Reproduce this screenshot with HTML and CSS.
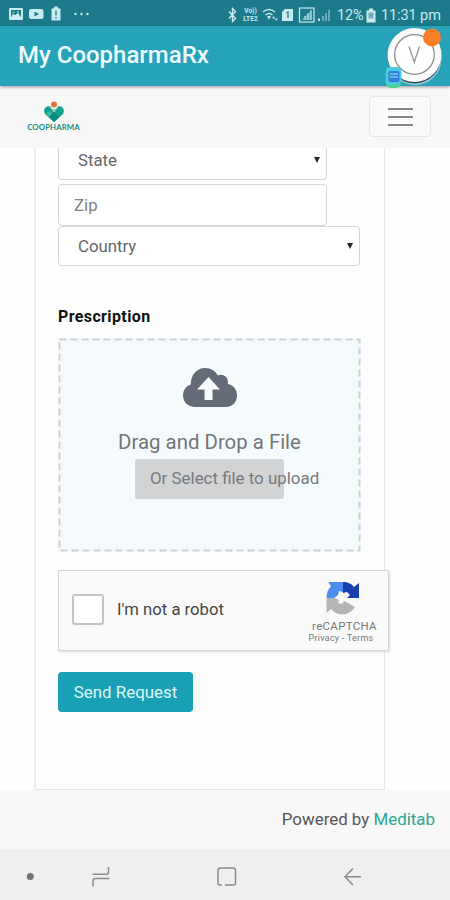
FILE: index.html
```html
<!DOCTYPE html>
<html lang="en">
<head>
<meta charset="utf-8">
<title>My CoopharmaRx</title>
<link rel="stylesheet" href="styles.css">
</head>
<body>
<div class="status">
  <svg class="status-left" width="92" height="26" viewBox="0 0 92 26">
    <rect x="9" y="8" width="14" height="12" rx="1" fill="#c8eaf0"/>
    <path d="M11 10h10v7l-3-4-3 2-2-1-2 3z" fill="#1c7a8a"/>
    <path d="M12.500 13l2-1M17 12h2" stroke="#c8eaf0"/>
    <rect x="29" y="9" width="14.500" height="10" rx="2" fill="#c8eaf0"/>
    <path d="M34.500 11.500l4.500 2.500-4.500 2.500z" fill="#1c7a8a"/>
    <path d="M51.500 8.500H54v-2h4v2h2.500v12h-9z" fill="#c8eaf0"/>
    <path d="M56 10.500v5M56 17v1.500" stroke="#1c7a8a" stroke-width="1.300"/>
    <g fill="#c8eaf0"><circle cx="75.500" cy="14" r="1.200"/><circle cx="81.500" cy="14" r="1.200"/><circle cx="87.500" cy="14" r="1.200"/></g>
  </svg>
  <div class="status-right">
    <svg width="9" height="16" viewBox="0 0 9 16"><path d="M1 4.500l6.500 7L4.500 14.500v-13l3 3-6.500 7" fill="none" stroke="#c8eaf0" stroke-width="1.400"/></svg>
    <div class="volte"><span>Vo))</span><span>LTE2</span></div>
    <svg width="70" height="18" viewBox="0 0 70 18">
      <g fill="none" stroke="#c8eaf0" stroke-width="1.500"><path d="M1 6q6-5 12 0M3.500 9q3.500-3 7 0"/></g>
      <path d="M5 10.500q2-1.500 4 0l-2 3zM10 12l2-2 1 3zM13 13l3-1-2 3z" fill="#c8eaf0"/>
      <path d="M20 6l3-3h8v12H20z" fill="#c8eaf0"/><path d="M24.500 7l1.500-1v6" fill="none" stroke="#1c7a8a" stroke-width="1.200"/>
      <rect x="37.500" y="2" width="14.500" height="14" fill="none" stroke="#c8eaf0" stroke-width="1.200"/>
      <path d="M39.500 14l10-10v10z" fill="#65aab5"/><path d="M43 14v-4M46 14V7M49 14V4" stroke="#c8eaf0"/>
      <path d="M56 15v-2.500h2V15z" fill="#c8eaf0"/><path d="M60 15v-5h2v5zM63 15V7h2v8zM66 15V4h2v11z" fill="#65aab5"/>
    </svg>
    <span class="battery">12%</span>
    <svg class="cell" width="10" height="15" viewBox="0 0 10 15"><path d="M.5 2.500H3V.5h4v2h2.500v12h-9z" fill="#c8eaf0"/><path d="M2.500 4.500h5v6h-5z" fill="#6eacb9"/></svg>
    <span class="time">11:31 pm</span>
  </div>
</div>
<header class="appbar">
  <h1>My CoopharmaRx</h1>
  <svg class="bubble" width="66" height="66" viewBox="0 0 66 66">
    <circle cx="35" cy="32.500" r="26.500" fill="#a8d0d8"/>
    <circle cx="34.500" cy="31" r="26.500" fill="#274c5e"/>
    <circle cx="34.500" cy="29" r="27" fill="#fcfcfc"/>
    <circle cx="34.500" cy="28.500" r="19.800" fill="#fff" stroke="#8e8e8e" stroke-width="1.300"/>
    <path d="M29 20.500l5.300 15.500 5.200-15.500" fill="none" stroke="#999" stroke-width="1.400"/>
    <circle cx="52" cy="11.500" r="9" fill="#fa7d28"/>
    <rect x="5.500" y="41" width="16" height="21" rx="6" fill="#43d58f"/>
    <rect x="6" y="41.500" width="15" height="17" rx="3" fill="#48cbe0"/>
    <rect x="8.500" y="45" width="11" height="11" rx="2" fill="#327fd7"/>
    <path d="M10 48h8M10 51h8" stroke="#a4eaf5" stroke-width="1.200"/>
  </svg>
</header>
<nav class="navbar">
  <div class="logo">
    <svg width="22" height="22" viewBox="0 0 22 22">
      <path d="M11 21L2.500 13.500C-1 9 3 4.500 7 5.500L11 9l4-3.500c4-1 8 3.500 4.500 8z" fill="#169f91"/>
      <path d="M2 12.500L11 21l4-4-8-7z" fill="#36b7a1"/>
      <path d="M11 21l-5-5 5-5 5 5z" fill="#08897e"/>
      <path d="M7.500 6l3.500 5 3.500-5" fill="none" stroke="#bce4d8"/>
      <circle cx="11" cy="3.500" r="3" fill="#dc7834"/>
    </svg>
    <span>COOPHARMA</span>
  </div>
  <button class="menu" aria-label="Menu"><i></i><i></i><i></i></button>
</nav>
<main>
  <form class="card">
    <div class="field state"><span>State</span><i class="caret"></i></div>
    <div class="field zip"><span>Zip</span></div>
    <div class="field country"><span>Country</span><i class="caret"></i></div>
    <h2>Prescription</h2>
    <div class="drop">
      <svg class="cloud" width="54" height="39" viewBox="0 0 54 39">
        <path d="M12 39C5 39 0 34 0 27.500c0-5.300 3.200-9.500 7.800-11C7.500 7 14 0 22 0c6 0 10.300 2.800 12.800 7.500C40 5 46 9 44.800 16 50.500 17 54 21.500 54 27.500 54 34 49.500 39 43 39z" fill="#646b76"/>
        <path d="M25.500 9L37 21.500h-7.500V32h-8V21.500H14z" fill="#f8fbfc"/>
      </svg>
      <p class="drag">Drag and Drop a File</p>
      <div class="select"><span>Or Select file to upload</span></div>
      <svg class="dashes" width="303" height="214" viewBox="0 0 303 214"><rect x="1.500" y="1.500" width="300" height="211" fill="none" stroke="#d0d1d1" stroke-width="2" stroke-dasharray="7 4"/></svg>
    </div>
    <div class="captcha">
      <div class="box"></div>
      <span class="robot">I'm not a robot</span>
      <div class="brand">
        <svg width="34" height="34" viewBox="0 0 34 34">
          <path d="M.5 17C.5 12 2 8 5 5.500L2.500 1H17v10l-4-1-1 4-4 3z" fill="#4a8ff0"/>
          <path d="M17 1c5 0 9 2 11 5l5-4v15H21l3-3-3-3-4 1z" fill="#1940ad"/>
          <path d="M.5 17H9l4 2-1 3 4 1 2-3 4 2 7 4C23 36 10 35 5 28l-4.500 4z" fill="#b5b5b5"/>
        </svg>
        <span class="rc">reCAPTCHA</span>
        <span class="terms">Privacy - Terms</span>
      </div>
    </div>
    <button class="send" type="button">Send Request</button>
  </form>
</main>
<footer><span>Powered by <a>Meditab</a></span></footer>
<div class="sysnav">
  <svg width="450" height="51" viewBox="0 0 450 51" fill="none" stroke="#8b8b8b" stroke-width="1.500">
    <circle cx="30.300" cy="27.500" r="3.500" fill="#747474" stroke="none"/>
    <path d="M92.500 25.300h14q2 0 2-2V18M109.500 29.500H95.500q-2.500 0-2.500 2.500v5.500"/>
    <path d="M222 36h-2q-2 0-2-2V21.500q0-2.500 2.500-2.500H233q2.500 0 2.500 2.500V34q0 2-2 2H225"/>
    <path d="M361 27.700h-15.500M353 19.500l-8 8.200 8 8.300"/>
  </svg>
</div>
</body>
</html>
```
FILE: styles.css
```css
* { box-sizing: border-box; }
body { margin: 0; width: 450px; height: 900px; overflow: hidden; background: #fff; font-family: Roboto, sans-serif; color: #666; display: flex; flex-direction: column; }
h1, h2, p { margin: 0; }
span { white-space: nowrap; }
.status { height: 26px; flex: none; background: #1c7a8a; display: flex; justify-content: space-between; color: #c8eaf0; }
.status-right { display: flex; align-items: center; padding: 4px 10px 0 0; font-size: 14.5px; }
.volte { display: flex; flex-direction: column; width: 17px; margin: 0 3px 0 5px; font-size: 6.6px; line-height: 8px; font-weight: 700; text-align: center; }
.battery { margin-left: 5px; width: 27px; letter-spacing: -.2px; }
.cell { margin: 0 5px 0 2px; }
.time { width: 59px; letter-spacing: -.1px; }
.appbar { position: relative; height: 60px; flex: none; background: #26a3b9; padding: 0 0 2px 18px; display: flex; align-items: center; box-shadow: 0 1px 3px #0006; z-index: 2; }
h1 { font-size: 24px; font-weight: 500; color: #eefcff; line-height: 28px; }
.bubble { position: absolute; left: 380px; top: 0; }
.navbar { height: 62px; flex: none; background: #f8f8f8; display: flex; justify-content: space-between; align-items: flex-start; padding: 10px 19px 0 27px; }
.logo { display: flex; flex-direction: column; align-items: center; width: 53px; padding-top: 5px; }
.logo span { font: 700 7.8px/9px Lato, sans-serif; color: #168c82; margin-top: 0; letter-spacing: .1px; }
.menu { width: 62px; height: 41px; border: 1px solid #e7e7e7; border-radius: 4px; background: #fafafa; padding: 0; display: flex; flex-direction: column; align-items: center; justify-content: center; gap: 6px; }
.menu i { width: 25px; height: 2px; background: #858585; }
main { height: 642px; flex: none; overflow: hidden; background: #fefefe; }
.card { margin-left: 34px; width: 351px; height: 642px; border: 1px solid #e6e6e6; border-left: 2px solid #efefef; border-top: 0; padding: 0 0 0 22px; display: flex; flex-direction: column; align-items: flex-start; }
.field { border: 1px solid #d7d7d7; border-radius: 4px; display: flex; flex: none; align-items: center; justify-content: space-between; padding: 0 6px 0 19px; font-size: 16.8px; background: #fff; }
.state { width: 269px; height: 40px; margin-top: -8px; border-top: 0; }
.zip { width: 269px; height: 42px; margin-top: 4px; padding-left: 15px; color: #808080; }
.country { width: 302px; height: 40px; }
.caret { border: 3.5px solid transparent; border-top: 6px solid #252525; border-bottom: 0; }
h2 { color: #111; font-size: 16px; font-weight: 700; line-height: 20px; margin-top: 41px; letter-spacing: .38px; }
.drop { position: relative; width: 303px; height: 214px; flex: none; margin-top: 11px; background: #f5fafc; padding-top: 30px; display: flex; flex-direction: column; align-items: center; }
.dashes { position: absolute; left: 0; top: 0; }
.cloud { flex: none; }
.drag { font-size: 20.4px; line-height: 24px; margin-top: 23px; color: #737578; white-space: nowrap; }
.select { width: 149px; height: 40px; margin-top: 5px; background: #d2d3d4; border-radius: 3px; padding-left: 15px; line-height: 39px; color: #77797d; font-size: 16.9px; }
.captcha { width: 331px; height: 81px; flex: none; margin-top: 18px; background: #fafafa; border: 1px solid #d5d5d5; box-shadow: 1px 1px 2px #0002; display: flex; align-items: center; padding-left: 13px; position: relative; z-index: 1; }
.box { width: 32px; height: 31px; border: 2px solid #c3c3c3; border-radius: 3px; background: #fff; margin-top: -3px; }
.robot { color: #454545; font-size: 16.7px; margin: -3px 0 0 13px; width: 188px; }
.brand { display: flex; flex-direction: column; align-items: center; width: 72px; height: 68px; color: #777; }
.brand svg { flex: none; margin: 4px 0 0 4px; }
.rc { font-size: 11.5px; line-height: 13px; margin: 5px 0 0 7px; letter-spacing: .3px; }
.terms { font-size: 8.9px; line-height: 11px; letter-spacing: .3px; }
.send { width: 135px; height: 40px; flex: none; margin-top: 21px; border: 0; border-radius: 4px; background: #19a0b4; color: #dcf7fa; font: 16.9px Roboto, sans-serif; padding: 0; white-space: nowrap; }
footer { height: 59px; flex: none; background: #f8f8f8; display: flex; align-items: center; justify-content: flex-end; padding: 0 15px 1px 0; color: #555; font-size: 16.9px; }
footer a { color: #2ba698; }
.sysnav { height: 51px; flex: none; background: #efefef; }
```
